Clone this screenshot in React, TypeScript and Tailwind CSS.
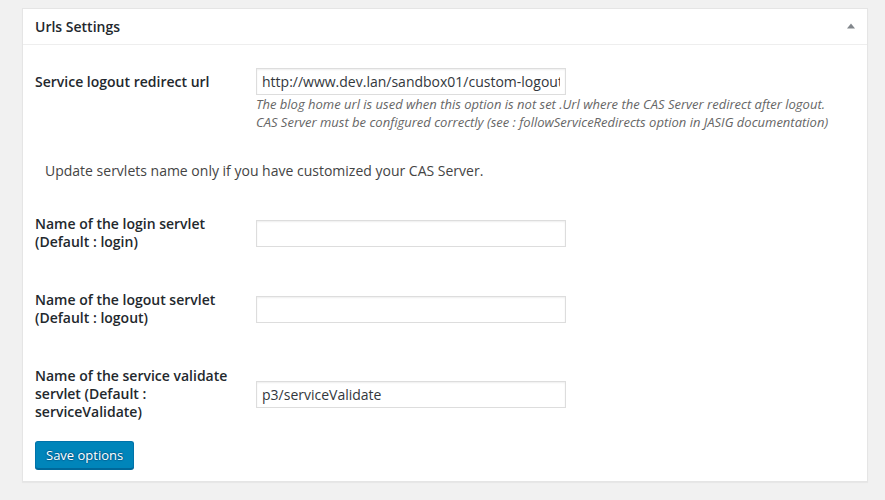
import React from "react";

const font = { fontFamily: '"Open Sans", "Noto Sans", sans-serif' };

function Row({
  label,
  value,
  children,
}: {
  label: React.ReactNode;
  value?: string;
  children?: React.ReactNode;
}) {
  return (
    <div className="flex items-center">
      <div className="w-[210px] shrink-0 self-start pr-[10px] pt-[20px] pb-[20px] text-[14px] font-semibold leading-[18px] text-[#23282d]">
        {label}
      </div>
      <div className="pl-[10px]">
        <input
          type="text"
          readOnly
          defaultValue={value ?? ""}
          className="ml-px block h-[27px] w-[310px] border border-[#dddddd] bg-white px-[5px] text-[14px] text-[#32373c] shadow-[inset_0_1px_2px_rgba(0,0,0,0.07)] outline-none"
          style={font}
        />
        {children}
      </div>
    </div>
  );
}

export default function App() {
  return (
    <div className="min-h-[500px] w-[885px] bg-[#f1f1f1] pl-[22px] pt-[8px]" style={font}>
      <div className="w-[846px] border border-[#e5e5e5] bg-white shadow-[0_1px_1px_rgba(0,0,0,0.04)]">
        <div className="flex h-[36px] items-center justify-between border-b border-[#eeeeee] px-3">
          <h2 className="text-[14px] font-semibold leading-[20px] text-[#23282d]">Urls Settings</h2>
          <svg width="8" height="6" viewBox="0 0 8 6" className="mt-[-1px]">
            <path d="M4 0.5 L8 5.5 L0 5.5 Z" fill="#82878c" />
          </svg>
        </div>
        <div className="px-3 pt-[8px] pb-[12px]">
          <div className="flex">
            <div className="w-[210px] shrink-0 pr-[10px] pt-[20px] text-[14px] font-semibold leading-[18px] text-[#23282d]">
              Service logout redirect url
            </div>
            <div className="pl-[10px] pt-[15px] pb-[15px]">
              <input
                type="text"
                readOnly
                defaultValue="http://www.dev.lan/sandbox01/custom-logout"
                className="ml-px block h-[27px] w-[310px] border border-[#dddddd] bg-white px-[5px] text-[14px] text-[#32373c] shadow-[inset_0_1px_2px_rgba(0,0,0,0.07)] outline-none"
                style={font}
              />
              <p className="ml-px whitespace-nowrap text-[13px] italic leading-[18px] text-[#666666]">
                The blog home url is used when this option is not set .Url where the CAS Server redirect after logout.
                <br />
                CAS Server must be configured correctly (see : followServiceRedirects option in JASIG documentation)
              </p>
            </div>
          </div>

          <p className="mt-[16px] mb-[15px] pl-[10px] text-[14px] leading-[18px] text-[#444444]">
            Update servlets name only if you have customized your CAS Server.
          </p>

          <Row
            label={
              <>
                Name of the login servlet
                <br />
                (Default : login)
              </>
            }
          />
          <Row
            label={
              <>
                Name of the logout servlet
                <br />
                (Default : logout)
              </>
            }
          />
          <Row
            value="p3/serviceValidate"
            label={
              <>
                Name of the service validate
                <br />
                servlet (Default :
                <br />
                serviceValidate)
              </>
            }
          />

          <button
            type="button"
            className="h-[28px] rounded-[3px] border border-[#0073aa] border-b-[#006799] bg-[#0085ba] px-[10px] pb-px text-[13px] leading-[26px] text-white shadow-[0_1px_0_#006799] [text-shadow:0_-1px_1px_#006799,1px_0_1px_#006799,0_1px_1px_#006799,-1px_0_1px_#006799]"
            style={font}
          >
            Save options
          </button>
        </div>
      </div>
    </div>
  );
}
